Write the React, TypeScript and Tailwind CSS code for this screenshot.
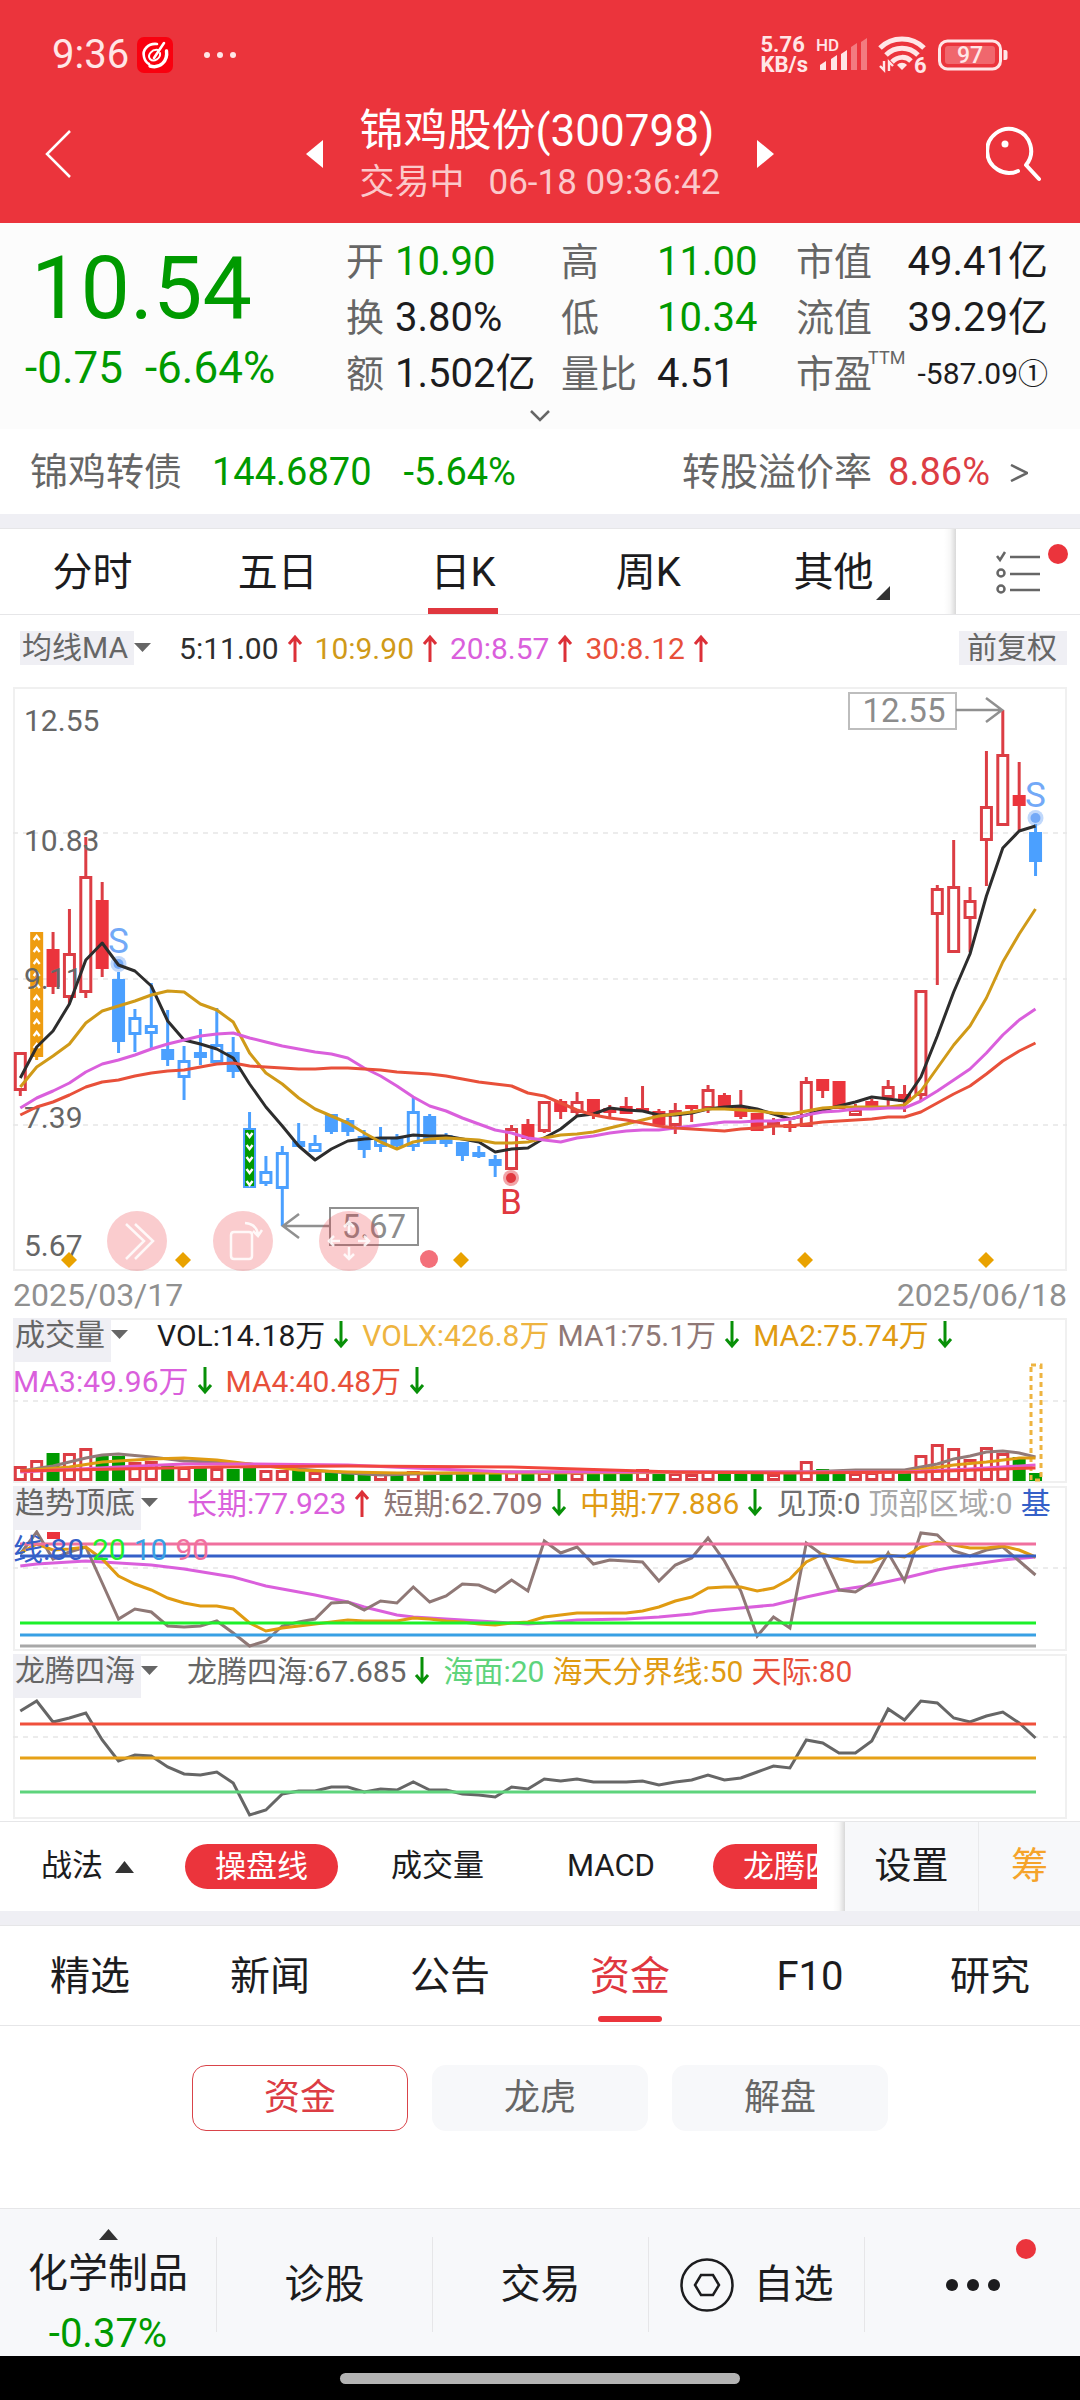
import type { ReactNode } from 'react';
import clsx from 'clsx';

type Kind = 'r' | 'R' | 'b' | 'B' | 'o' | 'g';
type Candle = [high: number, top: number, bottom: number, low: number, kind: Kind];
type Point = [index: number, y: number];

const STEP = 16.375;
const xAt = (i: number) => 7.3 + STEP * i;

const linePath = (ys: number[]) => ys.map((y, i) => `${xAt(i).toFixed(1)},${y}`).join(' ');
const sparsePath = (pts: Point[]) => pts.map(([i, y]) => `${xAt(i).toFixed(1)},${y}`).join(' ');

const candles: Candle[] = [
  [365, 365, 404, 409, 'r'], [245, 245, 370, 373, 'o'], [245, 262, 300, 307, 'R'], [222, 266, 311, 317, 'r'],
  [150, 189, 306, 311, 'r'], [195, 213, 282, 290, 'R'], [285, 292, 355, 366, 'B'], [322, 330, 348, 365, 'b'],
  [296, 338, 347, 361, 'b'], [323, 362, 373, 379, 'B'], [359, 373, 391, 413, 'b'], [342, 365, 371, 378, 'B'],
  [321, 357, 376, 376, 'b'], [350, 365, 385, 391, 'B'], [425, 441, 501, 501, 'g'], [469, 484, 497, 499, 'b'],
  [459, 465, 502, 539, 'b'], [436, 454, 460, 460, 'B'], [448, 456, 465, 465, 'b'], [427, 427, 445, 447, 'B'],
  [431, 433, 445, 449, 'B'], [443, 449, 463, 471, 'B'], [440, 452, 460, 465, 'b'], [447, 451, 459, 463, 'B'],
  [410, 424, 460, 464, 'b'], [427, 429, 457, 457, 'B'], [446, 448, 457, 460, 'B'], [455, 455, 469, 474, 'B'],
  [459, 465, 470, 471, 'B'], [468, 472, 479, 490, 'B'], [438, 441, 483, 483, 'r'], [432, 437, 452, 453, 'R'],
  [414, 414, 445, 446, 'r'], [412, 414, 425, 432, 'R'], [405, 414, 426, 429, 'r'], [412, 412, 428, 432, 'R'],
  [418, 421, 426, 431, 'R'], [410, 419, 427, 427, 'R'], [399, 421, 424, 424, 'R'], [422, 424, 438, 438, 'R'],
  [416, 423, 439, 447, 'r'], [418, 418, 422, 435, 'R'], [398, 402, 422, 426, 'r'], [406, 408, 420, 420, 'R'],
  [403, 420, 430, 432, 'R'], [426, 426, 444, 444, 'R'], [431, 435, 440, 448, 'r'], [434, 437, 441, 445, 'R'],
  [390, 394, 440, 440, 'r'], [392, 392, 404, 411, 'R'], [394, 394, 422, 422, 'R'], [417, 422, 429, 429, 'r'],
  [412, 414, 421, 422, 'R'], [393, 399, 411, 419, 'r'], [398, 407, 415, 425, 'R'], [303, 303, 409, 413, 'r'],
  [198, 201, 228, 298, 'r'], [153, 199, 266, 266, 'r'], [200, 213, 232, 265, 'r'], [64, 119, 154, 199, 'r'],
  [23, 67, 139, 139, 'r'], [75, 108, 119, 144, 'R'], [137, 145, 175, 189, 'B'],
];

const ma5 = [391, 360, 344, 317, 273, 256, 278, 284, 299, 334, 353, 357, 362, 371, 397, 420, 439, 459, 473, 462, 454, 452, 451, 451, 448, 449, 449, 452, 455, 465, 462, 461, 451, 442, 429, 427, 421, 423, 424, 428, 428, 426, 422, 420, 419, 422, 427, 432, 428, 423, 419, 415, 410, 412, 414, 390, 349, 305, 267, 209, 161, 144, 139];
const ma10 = [400, 380, 369, 357, 336, 324, 319, 314, 308, 304, 305, 317, 323, 335, 366, 386, 397, 411, 422, 429, 436, 446, 455, 462, 455, 452, 451, 452, 453, 456, 456, 455, 451, 448, 447, 445, 441, 437, 433, 429, 427, 425, 422, 422, 423, 424, 426, 427, 424, 421, 420, 420, 420, 420, 418, 404, 381, 358, 339, 311, 275, 247, 222];
const ma20 = [421, 411, 404, 396, 385, 377, 373, 368, 362, 357, 353, 349, 347, 346, 351, 355, 359, 362, 365, 367, 371, 381, 389, 399, 410, 419, 424, 431, 437, 443, 446, 451, 453, 455, 451, 449, 446, 444, 443, 443, 441, 439, 437, 435, 435, 434, 434, 432, 428, 425, 424, 422, 422, 421, 421, 414, 404, 393, 382, 366, 348, 333, 322];
const ma30 = [428, 420, 415, 408, 400, 395, 393, 389, 386, 384, 383, 380, 377, 376, 379, 380, 381, 382, 382, 381, 381, 382, 383, 385, 386, 387, 389, 392, 395, 397, 399, 406, 409, 416, 423, 428, 431, 433, 436, 439, 441, 442, 443, 444, 442, 441, 439, 439, 437, 435, 434, 433, 432, 430, 430, 425, 416, 407, 399, 387, 374, 364, 356];

// tops of the volume bars; u = up day (hollow), d = down day (filled)
const volTops = [148, 142, 135, 135, 130, 138, 138, 144, 143, 148, 149, 150, 150, 151, 150, 152, 152, 152, 154, 154, 154, 155, 154, 155, 153, 154, 155, 155, 155, 156, 153, 154, 154, 155, 154, 156, 155, 156, 151, 155, 155, 156, 153, 154, 154, 154, 156, 155, 143, 151, 153, 155, 154, 152, 152, 137, 126, 130, 141, 129, 135, 139, 155];
const volDirs = ['uuduudd', 'uudududduu', 'dudddudu', 'ddddd', 'udududddu', 'duuuddd', 'ududd', 'uuud', 'uuuuuudd'].join('');

const volMa: { color: string; pts: Point[] }[] = [
  { color: '#927a78', pts: [[0, 153], [2, 148], [3, 144], [4, 140], [5, 137], [6, 136], [8, 139], [10, 143], [12, 144], [14, 146], [17, 151], [20, 155], [22, 157], [24, 156], [30, 154], [36, 154], [48, 154], [51, 152], [54, 152], [56, 146], [57, 141], [58, 138], [59, 134], [60, 133], [61, 135], [62, 139]] },
  { color: '#e09b12', pts: [[0, 153], [3, 149], [5, 144], [8, 141], [10, 140], [12, 142], [14, 146], [17, 152], [20, 154], [23, 155], [30, 155], [54, 154], [57, 147], [59, 144], [61, 140], [62, 140]] },
  { color: '#e45bd0', pts: [[0, 154], [6, 149], [10, 146], [14, 146], [20, 147], [24, 150], [30, 154], [54, 154], [58, 151], [62, 147]] },
  { color: '#f2463c', pts: [[0, 153], [6, 151], [12, 149], [20, 148], [30, 149], [36, 152], [40, 154], [47, 155], [55, 154], [60, 151], [62, 150]] },
];

const shortTerm = [68, 46, 73, 66, 61, 97, 133, 123, 126, 140, 141, 140, 135, 147, 160, 155, 140, 136, 133, 117, 116, 124, 115, 117, 101, 116, 110, 98, 99, 106, 94, 105, 55, 67, 61, 78, 74, 75, 76, 95, 79, 72, 52, 75, 105, 150, 131, 142, 57, 69, 104, 106, 96, 67, 95, 47, 49, 65, 70, 64, 61, 75, 89];
const midTerm = [67, 58, 64, 63, 61, 73, 90, 98, 104, 112, 117, 120, 120, 123, 137, 145, 142, 140, 138, 136, 134, 135, 135, 135, 132, 133, 135, 136, 138, 139, 137, 136, 131, 129, 127, 127, 127, 127, 125, 121, 115, 111, 102, 101, 101, 105, 102, 93, 76, 68, 73, 76, 76, 69, 71, 61, 56, 59, 62, 62, 60, 64, 71];
const longTerm: Point[] = [[0, 80], [1, 78], [2, 77], [4, 75], [5, 76], [6, 77], [8, 79], [10, 83], [13, 91], [15, 100], [16, 103], [18, 109], [20, 116], [21, 121], [23, 129], [24, 131], [27, 134], [29, 136], [31, 138], [32, 137], [34, 134], [37, 133], [39, 131], [41, 128], [42, 125], [44, 122], [46, 119], [47, 115], [48, 111], [50, 104], [52, 99], [54, 92], [56, 84], [57, 81], [60, 74], [62, 71]];
const dragon = [57, 47, 68, 64, 59, 86, 107, 101, 102, 113, 120, 121, 118, 129, 161, 156, 140, 137, 137, 133, 133, 138, 135, 136, 128, 136, 136, 140, 141, 143, 133, 135, 125, 127, 125, 128, 128, 128, 127, 131, 128, 126, 121, 126, 124, 118, 112, 114, 86, 89, 99, 99, 87, 55, 66, 47, 49, 64, 68, 62, 58, 69, 84];

function CandleShape({ i, data }: { i: number; data: Candle }) {
  const [high, top, bottom, low, kind] = data;
  const x = xAt(i);
  const h = Math.max(bottom - top, 3);
  const hollow = kind === 'r' || kind === 'b';
  const color = kind === 'r' || kind === 'R' ? '#dc3d44' : kind === 'o' ? '#ee9c10' : '#4ba0ff';
  const marks: number[] = [];
  if (kind === 'o' || kind === 'g') {
    for (let y = top + 6; y < bottom - 4; y += 12) marks.push(y);
  }
  return (
    <g stroke={color} strokeWidth={3} fill="none">
      {high < top && <path d={`M${x} ${high}V${top}`} />}
      {low > bottom && <path d={`M${x} ${bottom}V${low}`} />}
      {hollow && <rect x={x - 5} y={top + 1.5} width={10} height={Math.max(h - 3, 2)} />}
      {!hollow && kind !== 'g' && (
        <rect x={x - 6.5} y={top} width={13} height={h} fill={kind === 'R' ? '#eb343c' : color} stroke="none" />
      )}
      {kind === 'g' && <rect x={x - 5.5} y={top + 1} width={11} height={h - 2} fill="#009a00" strokeWidth={2} />}
      {marks.map((y) => (
        <path
          key={y}
          d={kind === 'o' ? `M${x - 3} ${y + 2}l3 -4l3 4` : `M${x - 3} ${y - 1}l3 4l3 -4`}
          stroke="#fff"
          strokeWidth={2.4}
        />
      ))}
    </g>
  );
}

function Signal({ x, y, letterY, letter, color }: { x: number; y: number; letterY: number; letter: string; color: string }) {
  return (
    <g fill={color}>
      <circle cx={x} cy={y} r={8} opacity={0.45} />
      <circle cx={x} cy={y} r={5} />
      <text x={x} y={letterY} fontSize={35} textAnchor="middle">{letter}</text>
    </g>
  );
}

function Frame({ height, dashes }: { height: number; dashes: number[] }) {
  return (
    <g fill="none">
      <rect x={1} y={1} width={1052} height={height - 2} stroke="#f0f0f0" strokeWidth={2} />
      {dashes.map((y) => (
        <path key={y} d={`M0 ${y}H1054`} stroke="#e6e6e6" strokeWidth={1.5} strokeDasharray="5 5" />
      ))}
    </g>
  );
}

function PriceChart() {
  return (
    <svg viewBox="0 0 1054 584" className="block w-full">
      <Frame height={584} dashes={[146, 292, 438]} />
      {candles.map((c, i) => (
        <CandleShape key={i} i={i} data={c} />
      ))}
      <g fontSize={30} fill="#666">
        <text x={11} y={44}>12.55</text>
        <text x={11} y={164}>10.83</text>
        <text x={11} y={302}>9.11</text>
        <text x={11} y={441}>7.39</text>
        <text x={11} y={569}>5.67</text>
      </g>
      <Signal x={105.5} y={277} letterY={266} letter="S" color="#73a9f7" />
      <Signal x={1022.5} y={131} letterY={120} letter="S" color="#73a9f7" />
      <Signal x={498} y={491} letterY={527} letter="B" color="#e0383f" />
      <g fill="none" strokeWidth={3} strokeLinejoin="round">
        <polyline points={linePath(ma5)} stroke="#2d2d2d" />
        <polyline points={linePath(ma10)} stroke="#d09a18" />
        <polyline points={linePath(ma20)} stroke="#da5fdc" />
        <polyline points={linePath(ma30)} stroke="#e8503a" />
      </g>
      <g fill="none" stroke="#909090" strokeWidth={2}>
        <rect x={836} y={6} width={107} height={36} stroke="#bdbdbd" />
        <path d="M943 23H988M973 11L989 23L973 35" strokeWidth={2.5} />
        <rect x={317} y={521} width={88} height={37} />
        <path d="M317 539H271M286 527L270 539L286 551" strokeWidth={2.5} />
      </g>
      <g fill="#8c8c8c" fontSize={33} textAnchor="middle">
        <text x={891} y={35}>12.55</text>
        <text x={361} y={551}>5.67</text>
      </g>
      {[56, 170, 448, 792, 973].map((x) => (
        <path key={x} d={`M${x} 565l8 8l-8 8l-8 -8z`} fill="#e9a200" />
      ))}
      <circle cx={416} cy={572} r={9} fill="#f3707a" />
    </svg>
  );
}

function VolumeChart() {
  return (
    <svg viewBox="0 0 1054 165" className="block w-full">
      <Frame height={165} dashes={[83]} />
      {volTops.map((top, i) =>
        volDirs[i] === 'd' ? (
          <rect key={i} x={xAt(i) - 6.5} y={top} width={13} height={163 - top} fill="#009a00" />
        ) : (
          <rect key={i} x={xAt(i) - 5} y={top + 1.5} width={10} height={160 - top} fill="#fff" stroke="#dc3d44" strokeWidth={3} />
        ),
      )}
      <rect x={1018} y={47} width={10} height={115} fill="none" stroke="#eeb440" strokeWidth={3} strokeDasharray="5 4" />
      {volMa.map((m) => (
        <polyline key={m.color} points={sparsePath(m.pts)} fill="none" stroke={m.color} strokeWidth={3} />
      ))}
    </svg>
  );
}

function TrendChart() {
  return (
    <svg viewBox="0 0 1054 165" className="block w-full">
      <Frame height={165} dashes={[82]} />
      <rect x={34} y={46} width={13} height={7} fill="#eb343c" />
      <g fill="none" strokeWidth={3}>
        <path d="M7 160H1023" stroke="#a8a8a8" />
        <polyline points={sparsePath(longTerm)} stroke="#da5fdc" />
        <polyline points={linePath(shortTerm)} stroke="#8f7876" />
        <polyline points={linePath(midTerm)} stroke="#e09b12" />
        <path d="M7 58H1023" stroke="#f0709e" />
        <path d="M7 70H1023" stroke="#3560c8" />
        <path d="M7 137H1023" stroke="#1cf02a" />
        <path d="M7 149H1023" stroke="#38a0e4" />
      </g>
    </svg>
  );
}

function DragonChart() {
  return (
    <svg viewBox="0 0 1054 165" className="block w-full">
      <Frame height={165} dashes={[83]} />
      <g fill="none" strokeWidth={3}>
        <polyline points={linePath(dragon)} stroke="#666" />
        <path d="M7 70H1023" stroke="#f0503c" />
        <path d="M7 104H1023" stroke="#e6a117" />
        <path d="M7 138H1023" stroke="#5ed47c" />
      </g>
    </svg>
  );
}

function Arrow({ up }: { up?: boolean }) {
  return (
    <svg width="16" height="28" viewBox="0 0 16 28" className="mr-[5px] ml-2 shrink-0" fill="none" strokeWidth="3">
      {up ? <path d="M8 28V3M2 10L8 3L14 10" stroke="#dc3038" /> : <path d="M8 0V25M2 18L8 25L14 18" stroke="#089008" />}
    </svg>
  );
}

function Item({ children, className, dir }: { children: ReactNode; className: string; dir?: 'up' | 'down' }) {
  return (
    <span className={clsx('flex h-[34px] items-center whitespace-nowrap', className)}>
      {children}
      {dir && <Arrow up={dir === 'up'} />}
    </span>
  );
}

function Picker({ label, tall }: { label: string; tall?: boolean }) {
  return (
    <button type="button" className="mr-[21px] flex items-start text-[#666]">
      <span className={clsx('bg-[#efeff4] pr-1.5 pl-0.5 leading-[34px]', tall ? 'h-11' : 'h-[34px]')}>{label}</span>
      <svg width="17" height="9" viewBox="0 0 17 9" className="mt-3">
        <path d="M0 0H17L8.5 9Z" fill="#666" />
      </svg>
    </button>
  );
}

function Panel({ chart, children }: { chart: ReactNode; children: ReactNode }) {
  return (
    <div className="grid">
      <div className="[grid-area:1/1]">{chart}</div>
      <div className="flex flex-wrap content-start items-start gap-x-2 gap-y-0.5 [grid-area:1/1]">{children}</div>
    </div>
  );
}

function StatusBar() {
  return (
    <div className="flex h-[110px] items-center pr-[72px] pl-[52px] text-[#ffe6e7]">
      <span className="text-[40px]">9:36</span>
      <svg width="36" height="36" viewBox="0 0 36 36" className="ml-2">
        <rect width="36" height="36" rx="7" fill="#f9000f" />
        <g fill="none" stroke="#fff" strokeLinecap="round">
          <path d="M20 7C11 6 5 13 7 20C8 24 10 26 12 27" strokeWidth="2.6" />
          <path d="M13 29C23 32 31 24 29.5 14" strokeWidth="3.4" />
          <path d="M27 6L17 21" strokeWidth="2.6" />
          <path d="M21 13C15 12 10 18 13 22C17 26 24 21 23 16" strokeWidth="2" />
        </g>
      </svg>
      <svg width="34" height="8" viewBox="0 0 34 8" className="ml-[30px]" fill="#ffe6e7">
        <circle cx="4" cy="4" r="3" />
        <circle cx="17" cy="4" r="3" />
        <circle cx="30" cy="4" r="3" />
      </svg>
      <div className="ml-auto text-[22px] leading-[20px] font-bold">
        <div>5.76</div>
        <div>KB/s</div>
      </div>
      <svg width="50" height="34" viewBox="0 0 50 34" className="ml-[10px] overflow-visible" fill="#ffe6e7">
        <text x="-2" y="13" fontSize="17" fontWeight="500">HD</text>
        <path d="M2 27L8 23V32H2Z" />
        <path d="M13 21L19 17V32H13Z" />
        <path d="M23 16L29 12V32H23Z" />
        <path d="M33 9L39 5V32H33Z" opacity=".4" />
        <path d="M43 4L49 0V32H43Z" opacity=".4" />
      </svg>
      <svg width="48" height="40" viewBox="0 0 48 40" className="ml-[10px] overflow-visible" fill="none" stroke="#ffe6e7" strokeWidth="5">
        <path d="M2 13C14 1 34 1 46 13" />
        <path d="M8 20C17 11 31 11 40 20" />
        <path d="M14 27C20 21 28 21 33 26" />
        <path d="M19 30C22 27 26 27 29 30L24 35Z" fill="#ffe6e7" stroke="none" />
        <path d="M6 26V35L2 31M11 36V27L15 31" strokeWidth="2.4" />
        <text x="36" y="38" fontSize="22" fontWeight="700" fill="#ffe6e7" stroke="none">6</text>
      </svg>
      <svg width="70" height="32" viewBox="0 0 70 32" className="ml-[12px]">
        <rect x="1.5" y="2" width="61" height="28" rx="8" fill="none" stroke="#ffe6e7" strokeWidth="3" />
        <rect x="7" y="7" width="50" height="18" rx="3" fill="#fff" opacity=".25" />
        <path d="M65.500 11h2q2 0 2 2v6q0 2 -2 2h-2z" fill="#ffe6e7" />
        <text x="32" y="24" fontSize="23" fontWeight="500" textAnchor="middle" fill="#ffe6e7">97</text>
      </svg>
    </div>
  );
}

function Header() {
  return (
    <header className="bg-[#eb343c] text-white">
      <StatusBar />
      <div className="-mt-1 grid h-[117px] grid-cols-[1fr_auto_1fr] items-center px-[38px] pb-[13px]">
        <button type="button" aria-label="返回" className="mb-2 justify-self-start pl-[6px]">
          <svg width="28" height="48" viewBox="0 0 28 48" fill="none" stroke="#fff" strokeWidth="2.5">
            <path d="M26 1L3 24L26 47" />
          </svg>
        </button>
        <div className="flex items-center gap-9">
          <button type="button" aria-label="上一只" className="mb-2">
            <svg width="17" height="28" viewBox="0 0 17 28"><path d="M17 0V28L0 14Z" fill="#fff" /></svg>
          </button>
          <div>
            <h1 className="text-[44px] leading-[50px]">锦鸡股份(300798)</h1>
            <p className="flex gap-6 text-[35px] leading-[54px] text-[#fbc9cb]">
              <span>交易中</span>
              <span>06-18 09:36:42</span>
            </p>
          </div>
          <button type="button" aria-label="下一只" className="mb-2">
            <svg width="17" height="28" viewBox="0 0 17 28"><path d="M0 0V28L17 14Z" fill="#fff" /></svg>
          </button>
        </div>
        <button type="button" aria-label="搜索" className="mb-2 justify-self-end">
          <svg width="56" height="56" viewBox="0 0 56 56" fill="none" stroke="#fff" strokeWidth="4" strokeLinecap="round">
            <path d="M32 45A22 22 0 1 1 40 39L53 53" strokeLinejoin="round" />
            <circle cx="19" cy="18" r="3.5" fill="#fff" stroke="none" />
          </svg>
        </button>
      </div>
    </header>
  );
}

function Quote() {
  return (
    <section className="bg-[#fcfcfc] text-[#1c1c1e]">
      <div className="flex h-[181px] pt-[10px] pr-[32px]">
        <div className="w-[346px] shrink-0 text-[#009a00]">
          <div className="pl-[31px] text-[88px] leading-[110px]">10.54</div>
          <div className="flex gap-[22px] pl-[25px] text-[44px] leading-[50px]">
            <span>-0.75</span>
            <span>-6.64%</span>
          </div>
        </div>
        <dl className="grid flex-1 grid-cols-[49px_166px_96px_139px_76px_1fr] content-start pt-px text-[40px] leading-[56px] whitespace-nowrap [&>dt]:text-[38px] [&>dt]:text-[#666]">
          <dt>开</dt><dd className="text-[#009a00]">10.90</dd>
          <dt>高</dt><dd className="text-[#009a00]">11.00</dd>
          <dt>市值</dt><dd className="text-right">49.41亿</dd>
          <dt>换</dt><dd>3.80%</dd>
          <dt>低</dt><dd className="text-[#009a00]">10.34</dd>
          <dt>流值</dt><dd className="text-right">39.29亿</dd>
          <dt>额</dt><dd>1.502亿</dd>
          <dt>量比</dt><dd>4.51</dd>
          <dt className="flex">市盈<sup className="top-0 -ml-1 text-[18px] leading-6">TTM</sup></dt>
          <dd className="text-right text-[30px]">-587.09①</dd>
        </dl>
      </div>
      <div className="flex h-[25px] justify-center">
        <button type="button" aria-label="展开" className="h-6">
          <svg width="20" height="12" viewBox="0 0 20 12" fill="none" stroke="#666" strokeWidth="2.5"><path d="M1 1L10 10L19 1" /></svg>
        </button>
      </div>
      <a href="#bond" className="flex h-[85px] items-center bg-white pt-0.5 pr-[52px] pl-[30px] text-[38px] text-[#666]">
        <span>锦鸡转债</span>
        <span className="ml-[30px] text-[#009a00]">144.6870</span>
        <span className="ml-8 text-[#009a00]">-5.64%</span>
        <span className="ml-auto">转股溢价率</span>
        <span className="ml-4 text-[#dc3d44]">8.86%</span>
        <svg width="18" height="18" viewBox="0 0 18 18" className="ml-5" fill="none" stroke="#666" strokeWidth="2.5"><path d="M1 1L17 9L1 17" /></svg>
      </a>
    </section>
  );
}

const periods = ['分时', '五日', '日K', '周K', '其他'];

function PeriodTabs() {
  return (
    <nav className="flex h-[87px] border-y border-[#e6e6e8] bg-white">
      <div className="flex flex-1 pr-[18px]">
        {periods.map((p) => (
          <button key={p} type="button" className="relative flex-1 pt-0.5 text-[40px] text-[#1c1c1e]">
            {p}
            {p === '日K' && <span className="absolute bottom-0 left-1/2 h-1.5 w-[70px] -translate-x-1/2 bg-[#e0373f]" />}
            {p === '其他' && (
              <svg width="14" height="14" viewBox="0 0 14 14" className="absolute right-[36px] bottom-[14px]"><path d="M14 0V14H0Z" fill="#333" /></svg>
            )}
          </button>
        ))}
      </div>
      <div className="w-3 bg-linear-to-r from-black/0 via-black/3 to-black/15" />
      <button type="button" aria-label="指标列表" className="relative w-[124px] pl-[40px]">
        <svg width="46" height="44" viewBox="0 0 46 44" fill="none" stroke="#666" strokeWidth="2.5">
          <path d="M14 7H44M14 24H44M14 40H44" />
          <path d="M1 6L4 10L9 2" />
          <circle cx="5" cy="23" r="3.5" />
          <circle cx="5" cy="39" r="3.5" />
        </svg>
        <span className="absolute top-[15px] right-[12px] h-5 w-5 rounded-full bg-[#eb343c]" />
      </button>
    </nav>
  );
}

function FloatingTools() {
  const tools = [
    { name: '收起', d: 'M-11 -17L7 0L-11 18M-2 -17L16 0L-2 18' },
    { name: '横屏', d: 'M-9 -9H6Q9 -9 9 -6V15Q9 18 6 18H-9Q-12 18 -12 15V-6Q-12 -9 -9 -9ZM2 -18Q14 -17 15 -6M10 -10L15 -5L19 -11' },
    { name: '移动', d: 'M0 -8V-19M-5 -14L0 -19L5 -14M0 6V18M-5 13L0 18L5 13M-9 0H-20M-15 -5L-20 0L-15 5M9 0H20M15 -5L20 0L15 5' },
  ];
  return (
    <div className="absolute bottom-0 left-[94px] flex gap-[46px]">
      {tools.map((t) => (
        <button key={t.name} type="button" aria-label={t.name} className="h-[60px] w-[60px] rounded-full bg-[#eb343c]/25">
          <svg width="60" height="60" viewBox="-30 -30 60 60" fill="none" stroke="#fff" strokeOpacity=".85" strokeWidth="2.5"><path d={t.d} /></svg>
        </button>
      ))}
    </div>
  );
}

function Charts() {
  return (
    <section className="px-[13px] pb-0.5 text-[30px]">
      <div className="flex h-[72px] items-center gap-[7px] pb-1.5 pl-[7px]">
        <Picker label="均线MA" />
        <Item className="text-[#2d2d2d]" dir="up">5:11.00</Item>
        <Item className="text-[#d09a18]" dir="up">10:9.90</Item>
        <Item className="text-[#da5fdc]" dir="up">20:8.57</Item>
        <Item className="text-[#e8503a]" dir="up">30:8.12</Item>
        <button type="button" className="ml-auto bg-[#efeff4] pr-2.5 pl-2 leading-[34px] text-[#666]">前复权</button>
      </div>
      <div className="relative">
        <PriceChart />
        <FloatingTools />
      </div>
      <div className="flex h-[47px] items-center justify-between text-[32px] text-[#909090]">
        <time dateTime="2025-03-17">2025/03/17</time>
        <time dateTime="2025-06-18">2025/06/18</time>
      </div>
      <div className="flex flex-col gap-[3px]">
        <Panel chart={<VolumeChart />}>
          <Picker label="成交量" tall />
          <Item className="text-[#1c1c1e]" dir="down">VOL:14.18万</Item>
          <Item className="text-[#eeb440]">VOLX:426.8万</Item>
          <Item className="text-[#8f7876]" dir="down">MA1:75.1万</Item>
          <Item className="text-[#e09b12]" dir="down">MA2:75.74万</Item>
          <Item className="text-[#da5fdc]" dir="down">MA3:49.96万</Item>
          <Item className="text-[#e8503a]" dir="down">MA4:40.48万</Item>
        </Panel>
        <Panel chart={<TrendChart />}>
          <Picker label="趋势顶底" tall />
          <Item className="text-[#da5fdc]" dir="up">长期:77.923</Item>
          <Item className="text-[#8f7876]" dir="down">短期:62.709</Item>
          <Item className="text-[#e09b12]" dir="down">中期:77.886</Item>
          <Item className="text-[#707070]">见顶:0</Item>
          <Item className="text-[#a8a8a8]">顶部区域:0</Item>
          <Item className="text-[#3560c8]">基</Item>
          <Item className="text-[#3560c8]">线:80</Item>
          <Item className="text-[#1cf02a]">20</Item>
          <Item className="text-[#38a0e4]">10</Item>
          <Item className="text-[#f0709e]">90</Item>
        </Panel>
        <Panel chart={<DragonChart />}>
          <Picker label="龙腾四海" tall />
          <Item className="text-[#666]" dir="down">龙腾四海:67.685</Item>
          <Item className="text-[#5ed47c]">海面:20</Item>
          <Item className="text-[#e09b12]">海天分界线:50</Item>
          <Item className="text-[#e8503a]">天际:80</Item>
        </Panel>
      </div>
    </section>
  );
}

function IndicatorBar() {
  return (
    <div className="flex h-[90px] border-t border-[#e6e6e8] text-[31px] text-[#1c1c1e]">
      <div className="flex flex-1 items-center overflow-hidden pl-[41px] whitespace-nowrap">
        <button type="button" className="flex shrink-0 items-center gap-3">
          战法
          <svg width="19" height="12" viewBox="0 0 19 12"><path d="M0 12H19L9.5 0Z" fill="#333" /></svg>
        </button>
        <button type="button" className="ml-[51px] h-[45px] shrink-0 rounded-full bg-[#eb343c] px-[30px] text-white">操盘线</button>
        <button type="button" className="ml-[53px] shrink-0">成交量</button>
        <button type="button" className="ml-[83px] shrink-0">MACD</button>
        <button type="button" className="ml-[58px] h-[45px] shrink-0 rounded-full bg-[#eb343c] px-[30px] text-white">龙腾四海</button>
      </div>
      <div className="ml-4 w-3 bg-linear-to-r from-black/0 via-black/3 to-black/15" />
      <button type="button" className="w-[133px] bg-[#f7f8fa] text-[37px]">设置</button>
      <button type="button" className="w-[102px] border-l border-[#e9eaec] bg-[#f7f8fa] pl-8 text-left text-[37px] text-[#f5a32a]">筹</button>
    </div>
  );
}

function InfoSection() {
  const tabs = ['精选', '新闻', '公告', '资金', 'F10', '研究'];
  const subTabs = ['资金', '龙虎', '解盘'];
  return (
    <section>
      <nav className="grid h-[101px] grid-cols-6 border-y border-[#e6e6e8] text-[40px] text-[#1c1c1e]">
        {tabs.map((t) => (
          <button key={t} type="button" className={clsx('relative pt-0.5', t === '资金' && 'text-[#e0373f]')}>
            {t}
            {t === '资金' && <span className="absolute bottom-[3px] left-1/2 h-1.5 w-16 -translate-x-1/2 rounded-full bg-[#eb343c]" />}
          </button>
        ))}
      </nav>
      <div className="flex justify-center gap-6 pt-[39px] text-[36px]">
        {subTabs.map((t, i) => (
          <button
            key={t}
            type="button"
            className={clsx(
              'h-[66px] w-[216px] rounded-[14px]',
              i === 0 ? 'border border-[#d9444a] text-[#dc3d44]' : 'bg-[#f7f8fa] text-[#666]',
            )}
          >
            {t}
          </button>
        ))}
      </div>
    </section>
  );
}

function BottomNav() {
  return (
    <footer className="mt-auto">
      <nav className="grid h-[148px] grid-cols-5 border-t border-[#e6e6e8] bg-[#f7f8fa] text-[40px] text-[#1c1c1e]">
        <button type="button" className="flex flex-col items-center pt-5">
          <svg width="19" height="11" viewBox="0 0 19 11"><path d="M0 11H19L9.5 0Z" fill="#333" /></svg>
          <span className="leading-[68px]">化学制品</span>
          <span className="leading-[52px] text-[#009a00]">-0.37%</span>
        </button>
        <button type="button" className="my-7 border-l border-[#e6e6e8]">诊股</button>
        <button type="button" className="my-7 border-l border-[#e6e6e8]">交易</button>
        <button type="button" className="my-7 flex items-center justify-center gap-5 border-l border-[#e6e6e8]">
          <svg width="54" height="54" viewBox="0 0 54 54" fill="none" stroke="#1c1c1e" strokeWidth="2.5">
            <circle cx="27" cy="27" r="25.5" />
            <path d="M21 17H33L39 27L33 37H21L15 27Z" />
          </svg>
          自选
        </button>
        <button type="button" aria-label="更多" className="relative my-7 flex items-center justify-center border-l border-[#e6e6e8]">
          <svg width="56" height="14" viewBox="0 0 56 14" fill="#1c1c1e">
            <circle cx="7" cy="7" r="6" />
            <circle cx="28" cy="7" r="6" />
            <circle cx="49" cy="7" r="6" />
          </svg>
          <span className="absolute top-0.5 right-11 h-5 w-5 rounded-full bg-[#eb343c]" />
        </button>
      </nav>
      <div className="flex h-11 items-center justify-center bg-black">
        <div className="h-[11px] w-[400px] rounded-full bg-[#b3b3b3]" />
      </div>
    </footer>
  );
}

export default function App() {
  return (
    <div className="flex min-h-screen flex-col bg-white font-['Roboto','Noto_Sans_CJK_SC',sans-serif]">
      <Header />
      <Quote />
      <div className="h-[14px] bg-[#efeff4]" />
      <PeriodTabs />
      <Charts />
      <IndicatorBar />
      <div className="h-[14px] bg-[#efeff4]" />
      <InfoSection />
      <BottomNav />
    </div>
  );
}
